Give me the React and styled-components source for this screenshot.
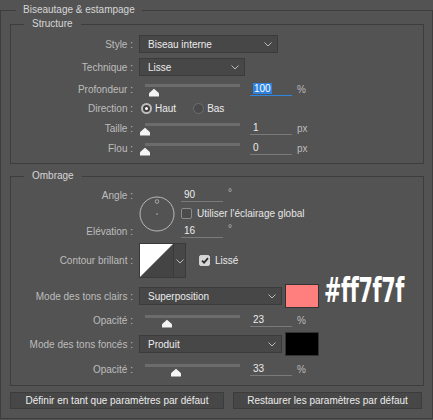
import React from 'react';
import styled, { createGlobalStyle } from 'styled-components';

const GlobalStyle = createGlobalStyle`
  html, body {
    margin: 0;
    padding: 0;
    background: #535353;
  }
  body {
    font-family: 'Liberation Sans', Arial, sans-serif;
    font-size: 10px;
    color: #e6e6e6;
  }
`;

const Panel = styled.div`
  width: 433px;
  height: 420px;
  padding-top: 3px;
  box-sizing: border-box;
  background: #535353;
  overflow: hidden;
`;

const Group = styled.fieldset`
  margin: ${p => p.$mt || 0}px 0 0 0;
  padding: ${p => p.$pad};
  border: 1px solid #3d3d3d;
  min-inline-size: 0;
  box-sizing: border-box;
  width: ${p => p.$w}px;
`;

const Legend = styled.legend`
  margin-left: ${p => p.$ml}px;
  padding: 0 ${p => p.$px}px;
  line-height: 14px;
  font-size: 10px;
  color: #d6d6d6;
`;

const Row = styled.div`
  display: grid;
  grid-template-columns: 122px 1fr;
  column-gap: 6px;
  align-items: center;
  height: ${p => p.$h}px;
  margin-top: ${p => p.$mt || 0}px;
`;

const Label = styled.div`
  text-align: right;
  color: #bdbdbd;
  white-space: nowrap;
`;

const Content = styled.div`
  display: flex;
  align-items: center;
  gap: ${p => p.$gap || 0}px;
`;

const SelectBox = styled.div`
  width: ${p => p.$w}px;
  height: 18px;
  box-sizing: border-box;
  background: #474747;
  border: 1px solid #3b3b3b;
  display: flex;
  align-items: center;
  justify-content: space-between;
  padding: 0 5px 0 8px;
  color: #ececec;
`;

const Chevron = () => (
  <svg width="8" height="5" viewBox="0 0 8 5">
    <path d="M0.5 0.5 L4 4 L7.5 0.5" fill="none" stroke="#bcbcbc" strokeWidth="1" />
  </svg>
);

const Select = ({ w, children }) => (
  <SelectBox $w={w}>
    <span>{children}</span>
    <Chevron />
  </SelectBox>
);

const SliderBox = styled.div`
  position: relative;
  width: 105px;
  height: 16px;
  flex: none;
`;

const Track = styled.div`
  position: absolute;
  left: 6px;
  right: 4px;
  top: 3px;
  height: 3px;
  background: #6c6c6c;
`;

const Thumb = styled.svg`
  position: absolute;
  top: 7px;
`;

const Slider = ({ value }) => (
  <SliderBox>
    <Track />
    <Thumb width="12" height="9" viewBox="0 0 12 9" style={{ left: 6 + value * 95 - 6 }}>
      <path d="M1 8.5 L1 6 Q1 5 2 4.3 L6 0.8 L10 4.3 Q11 5 11 6 L11 8.5 Z" fill="#f4f4f4" />
    </Thumb>
  </SliderBox>
);

const NumField = styled.div`
  width: ${p => p.$w || 42}px;
  height: 14px;
  box-sizing: border-box;
  border-bottom: 1px solid ${p => (p.$focus ? '#2f86e0' : '#7a7a7a')};
  padding-left: 3px;
  line-height: 13px;
  color: #ececec;
  flex: none;
`;

const Highlight = styled.span`
  background: #2d83df;
  color: #fff;
  padding: 0 1px;
`;

const Unit = styled.span`
  color: #bdbdbd;
  position: relative;
  top: ${p => p.$up || 0}px;
`;

const SliderRow = ({ label, value, num, unit, focus, h, mt }) => (
  <Row $h={h} $mt={mt}>
    <Label>{label}</Label>
    <Content>
      <Slider value={value} />
      <NumField $focus={focus} style={{ marginLeft: 6 }}>
        {focus ? <Highlight>{num}</Highlight> : num}
      </NumField>
      <Unit style={{ marginLeft: 5 }}>{unit}</Unit>
    </Content>
  </Row>
);

const RadioDot = styled.span`
  width: 11px;
  height: 11px;
  box-sizing: border-box;
  border-radius: 50%;
  flex: none;
  border: ${p => (p.$on ? '2px solid #bdbdbd' : '1px solid #6e6e6e')};
  background: ${p => (p.$on ? '#3e3e3e' : '#4a4a4a')};
  display: flex;
  align-items: center;
  justify-content: center;
  &::after {
    content: '';
    width: 3px;
    height: 3px;
    border-radius: 50%;
    background: ${p => (p.$on ? '#ffffff' : 'transparent')};
  }
`;

const Option = styled.span`
  display: flex;
  align-items: center;
  gap: 3px;
  color: #ececec;
  margin-left: ${p => p.$ml || 0}px;
`;

const CheckBox = styled.span`
  width: 11px;
  height: 11px;
  box-sizing: border-box;
  border-radius: 2px;
  flex: none;
  border: 1px solid ${p => (p.$on ? '#d2d2d2' : '#8a8a8a')};
  background: ${p => (p.$on ? '#d6d6d6' : '#4c4c4c')};
  display: flex;
  align-items: center;
  justify-content: center;
`;

const Check = ({ on }) => (
  <CheckBox $on={on}>
    {on && (
      <svg width="8" height="7" viewBox="0 0 8 7">
        <path d="M1 3.6 L3.1 5.6 L7 1.2" fill="none" stroke="#2e2e2e" strokeWidth="1.8" />
      </svg>
    )}
  </CheckBox>
);

const AngleGrid = styled.div`
  display: grid;
  grid-template-columns: 122px 36px auto;
  grid-template-rows: 18px 18px 18px;
  column-gap: 6px;
  align-items: center;
`;

const Dial = styled.svg`
  grid-column: 2;
  grid-row: 1 / span 3;
  align-self: center;
  margin-top: 1px;
`;

const ContourBox = styled.div`
  display: flex;
  height: 35px;
`;

const ContourPreview = styled.svg`
  width: 35px;
  height: 35px;
  display: block;
`;

const ContourDrop = styled.div`
  width: 12px;
  height: 35px;
  box-sizing: border-box;
  background: #474747;
  border: 1px solid #3b3b3b;
  border-left: none;
  display: flex;
  align-items: center;
  justify-content: center;
  padding-top: 2px;
`;

const Swatch = styled.div`
  width: 34px;
  height: 24px;
  box-sizing: border-box;
  border: 1px solid #333;
  background: ${p => p.$c};
  flex: none;
`;

const HexTag = styled.span`
  display: inline-block;
  font-family: 'DejaVu Sans Condensed', 'DejaVu Sans', sans-serif;
  font-weight: 700;
  font-size: 33px;
  line-height: 26px;
  color: #ffffff;
  letter-spacing: -0.5px;
  margin-left: 5px;
  position: relative;
  top: -5px;
  white-space: nowrap;
  transform: scaleX(0.7);
  transform-origin: left center;
`;

const ButtonBar = styled.div`
  display: flex;
  gap: 9px;
  margin-top: 6px;
`;

const Button = styled.div`
  width: ${p => p.$w}px;
  height: 17px;
  box-sizing: border-box;
  background: #474747;
  border: 1px solid #3c3c3c;
  display: flex;
  align-items: center;
  justify-content: center;
  color: #ececec;
`;

const App = () => {
  return (
    <Panel>
      <GlobalStyle />
      <Group $w={433} $pad="0 7px 9px 9px">
        <Legend $ml={6} $px={7}>Biseautage &amp; estampage</Legend>

        <Group $w={414} $pad="4px 0 4px 0">
          <Legend $ml={13} $px={8}>Structure</Legend>
          <Row $h={18}>
            <Label>Style :</Label>
            <Content>
              <Select w={139}>Biseau interne</Select>
            </Content>
          </Row>
          <Row $h={28}>
            <Label>Technique :</Label>
            <Content>
              <Select w={106}>Lisse</Select>
            </Content>
          </Row>
          <SliderRow h={16} label="Profondeur :" value={0.09} num="100" unit="%" focus />
          <Row $h={22}>
            <Label>Direction :</Label>
            <Content>
              <Option $ml={2}>
                <RadioDot $on />
                Haut
              </Option>
              <Option $ml={17}>
                <RadioDot />
                Bas
              </Option>
            </Content>
          </Row>
          <SliderRow h={18} label="Taille :" value={0} num="1" unit="px" />
          <SliderRow h={22} label="Flou :" value={0} num="0" unit="px" />
        </Group>

        <Group $w={414} $mt={5} $pad="3px 0 4px 0">
          <Legend $ml={13} $px={8}>Ombrage</Legend>
          <AngleGrid>
            <Label style={{ gridColumn: 1, gridRow: 1 }}>Angle :</Label>
            <Dial width="36" height="36" viewBox="0 0 36 36">
              <circle cx="18" cy="18" r="17" fill="none" stroke="#b8b8b8" strokeWidth="1" />
              <circle cx="18" cy="5.5" r="1.8" fill="none" stroke="#a8a8a8" strokeWidth="1" />
              <circle cx="18" cy="18" r="0.8" fill="#b8b8b8" />
            </Dial>
            <Content style={{ gridColumn: 3, gridRow: 1 }}>
              <NumField>90</NumField>
              <Unit $up={-3} style={{ marginLeft: 5 }}>°</Unit>
            </Content>
            <Content $gap={5} style={{ gridColumn: 3, gridRow: 2 }}>
              <Check />
              <span>Utiliser l'éclairage global</span>
            </Content>
            <Label style={{ gridColumn: 1, gridRow: 3 }}>Elévation :</Label>
            <Content style={{ gridColumn: 3, gridRow: 3 }}>
              <NumField>16</NumField>
              <Unit $up={-3} style={{ marginLeft: 5 }}>°</Unit>
            </Content>
          </AngleGrid>

          <Row $h={35} $mt={3}>
            <Label>Contour brillant :</Label>
            <Content>
              <ContourBox>
                <ContourPreview viewBox="0 0 35 35">
                  <rect x="0" y="0" width="35" height="35" fill="#444444" />
                  <path d="M0 0 L35 0 L0 35 Z" fill="#ffffff" />
                  <rect x="0.5" y="0.5" width="34" height="34" fill="none" stroke="#3a3a3a" />
                </ContourPreview>
                <ContourDrop>
                  <Chevron />
                </ContourDrop>
              </ContourBox>
              <Option $ml={13} style={{ gap: 5 }}>
                <Check on />
                Lissé
              </Option>
            </Content>
          </Row>

          <Row $h={26} $mt={5}>
            <Label>Mode des tons clairs :</Label>
            <Content>
              <Select w={143}>Superposition</Select>
              <Swatch $c="#ff7f7f" style={{ marginLeft: 3 }} />
              <HexTag>#ff7f7f</HexTag>
            </Content>
          </Row>
          <SliderRow h={22} label="Opacité :" value={0.23} num="23" unit="%" />
          <Row $h={26}>
            <Label>Mode des tons foncés :</Label>
            <Content>
              <Select w={143}>Produit</Select>
              <Swatch $c="#000000" style={{ marginLeft: 3 }} />
            </Content>
          </Row>
          <SliderRow h={24} label="Opacité :" value={0.33} num="33" unit="%" />
        </Group>

        <ButtonBar>
          <Button $w={214}>Définir en tant que paramètres par défaut</Button>
          <Button $w={189}>Restaurer les paramètres par défaut</Button>
        </ButtonBar>
      </Group>
    </Panel>
  );
};

export default App;
